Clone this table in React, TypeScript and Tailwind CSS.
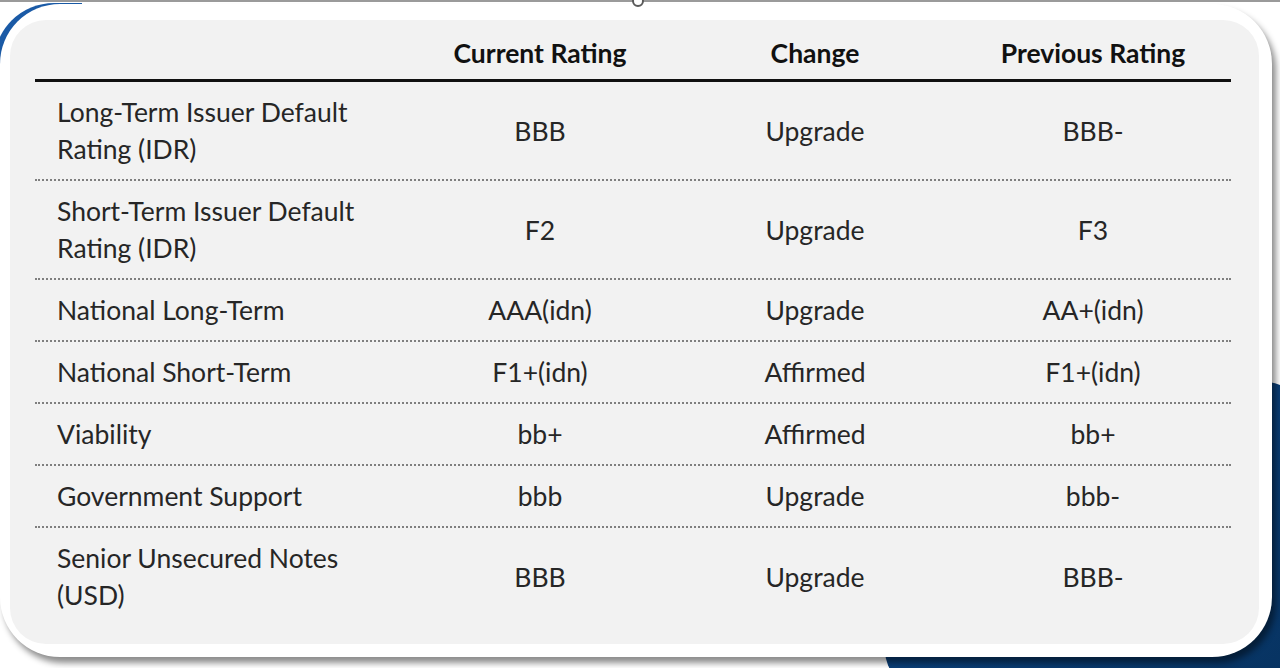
const rows: { label: string[]; current: string; change: string; previous: string }[] = [
  { label: ["Long-Term Issuer Default", "Rating (IDR)"], current: "BBB", change: "Upgrade", previous: "BBB-" },
  { label: ["Short-Term Issuer Default", "Rating (IDR)"], current: "F2", change: "Upgrade", previous: "F3" },
  { label: ["National Long-Term"], current: "AAA(idn)", change: "Upgrade", previous: "AA+(idn)" },
  { label: ["National Short-Term"], current: "F1+(idn)", change: "Affirmed", previous: "F1+(idn)" },
  { label: ["Viability"], current: "bb+", change: "Affirmed", previous: "bb+" },
  { label: ["Government Support"], current: "bbb", change: "Upgrade", previous: "bbb-" },
  { label: ["Senior Unsecured Notes", "(USD)"], current: "BBB", change: "Upgrade", previous: "BBB-" },
];

const cols = "grid grid-cols-[370px_270px_280px_276px]";

export default function App() {
  return (
    <div className="relative h-[668px] w-[1280px] overflow-hidden bg-white font-['Lato',sans-serif]">
      {/* decorative blue shapes behind the card */}
      <div className="absolute left-[-6px] top-[3px] h-[200px] w-[88px] rounded-tl-[60px] bg-[#1a5aa6]" />
      <div className="absolute left-[885px] top-[382px] h-[308px] w-[420px] rounded-[40px] bg-gradient-to-br from-[#0d4a8e] to-[#07325f]" />

      {/* scrub line */}
      <div className="absolute left-0 top-0 z-20 h-[2px] w-full bg-[#9a9a9a]" />
      <div className="absolute left-[632px] top-[-5px] z-20 h-[12px] w-[12px] rounded-full border-2 border-[#5a5a5a] bg-white" />

      <div className="relative z-10 mt-[4px] h-[653px] w-[1272px] rounded-[60px] bg-white pb-[13px] pl-[10px] pr-[13px] pt-[16px] shadow-[4px_6px_6px_rgba(0,0,0,0.45)]">
        <div className="h-full rounded-[36px] bg-[#f2f2f2] pl-[25px] pr-[28px] pt-[15px]">
          <div className={`${cols} border-b-[3px] border-[#111] pb-[7px] text-[26.5px] font-bold leading-[37px] text-[#111]`}>
            <div />
            <div className="text-center">Current Rating</div>
            <div className="text-center">Change</div>
            <div className="text-center">Previous Rating</div>
          </div>
          {rows.map((r, i) => (
            <div
              key={i}
              className={`${cols} items-center pb-[11px] pt-3 text-[26.5px] leading-[37px] text-[#262626] ${
                i < rows.length - 1 ? "border-b-2 border-dotted border-[#7f7f7f]" : ""
              }`}
            >
              <div className="pl-[22px]">
                {r.label.map((l) => (
                  <div key={l}>{l}</div>
                ))}
              </div>
              <div className="text-center">{r.current}</div>
              <div className="text-center">{r.change}</div>
              <div className="text-center">{r.previous}</div>
            </div>
          ))}
        </div>
      </div>
    </div>
  );
}
